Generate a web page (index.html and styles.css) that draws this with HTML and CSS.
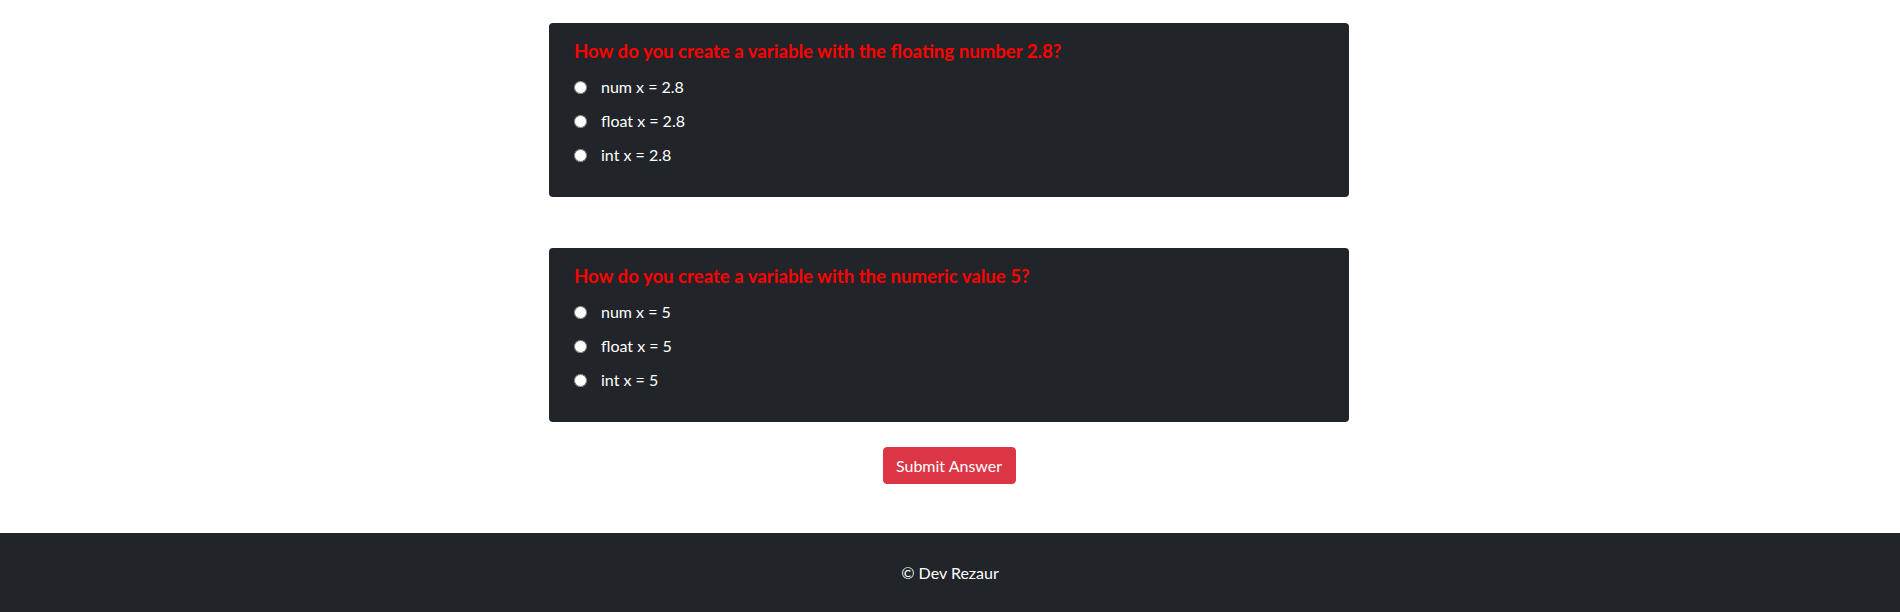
FILE: index.html
```html
<!DOCTYPE html>
<html lang="en">
<head>
<meta charset="utf-8">
<title>Quiz</title>
<link rel="stylesheet" href="styles.css">
</head>
<body>
<main class="quiz">
  <form class="quiz-form">
    <section class="card">
      <h5 class="question">How do you create a variable with the floating number 2.8?</h5>
      <label class="option"><input type="radio" name="q1"><span>num x = 2.8</span></label>
      <label class="option"><input type="radio" name="q1"><span>float x = 2.8</span></label>
      <label class="option"><input type="radio" name="q1"><span>int x = 2.8</span></label>
    </section>
    <section class="card card-gap">
      <h5 class="question">How do you create a variable with the numeric value 5?</h5>
      <label class="option"><input type="radio" name="q2"><span>num x = 5</span></label>
      <label class="option"><input type="radio" name="q2"><span>float x = 5</span></label>
      <label class="option"><input type="radio" name="q2"><span>int x = 5</span></label>
    </section>
    <div class="actions">
      <button type="button" class="btn-submit">Submit Answer</button>
    </div>
  </form>
</main>
<footer class="footer">© Dev Rezaur</footer>
</body>
</html>
```

FILE: styles.css
```css
html, body {
  margin: 0;
  padding: 0;
}
body {
  font-family: "Lato", "Noto Sans", "Liberation Sans", sans-serif;
  font-size: 16px;
  color: #212529;
  background: #fff;
}
.quiz {
  width: 800px;
  margin: 0 0 0 calc(50% - 401px);
  padding-top: 23px;
}
.quiz-form {
  display: flex;
  flex-direction: column;
}
.card {
  background: #212529;
  border-radius: 4px;
  padding: 16px 25px 30px;
  display: flex;
  flex-direction: column;
  gap: 10px;
}
.card-gap {
  margin-top: 51px;
}
.question {
  margin: 0 0 2px;
  font-size: 18.6px;
  line-height: 24px;
  font-weight: 700;
  color: #ff0000;
}
.option {
  display: flex;
  align-items: center;
  height: 24px;
  gap: 14px;
  color: #fff;
  font-size: 16px;
  line-height: 24px;
}
.option input {
  margin: 0;
  width: 13px;
  height: 13px;
}
.actions {
  display: flex;
  justify-content: center;
  margin-top: 25px;
}
.btn-submit {
  font-family: inherit;
  font-size: 16px;
  line-height: 24px;
  color: #fff;
  background: #dc3545;
  border: 1px solid #dc3545;
  border-radius: 4px;
  padding: 6px 12px;
  height: 37px;
  width: 133px;
  cursor: pointer;
}
.footer {
  margin-top: 49px;
  background: #212529;
  color: #fff;
  text-align: center;
  padding: 28px 0 30px;
  font-size: 16px;
  line-height: 24px;
}
```
